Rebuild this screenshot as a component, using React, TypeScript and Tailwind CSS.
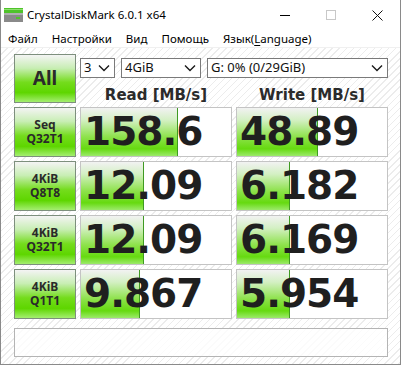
import React from "react"

const rows = [
    { top: "Seq", bottom: "Q32T1", read: "158.6", readBar: 97, write: "48.89", writeBar: 81 },
    { top: "4KiB", bottom: "Q8T8", read: "12.09", readBar: 63, write: "6.182", writeBar: 53 },
    { top: "4KiB", bottom: "Q32T1", read: "12.09", readBar: 63, write: "6.169", writeBar: 53 },
    { top: "4KiB", bottom: "Q1T1", read: "9.867", readBar: 59, write: "5.954", writeBar: 53 },
]

const ui = "font-['Noto_Sans','Open_Sans',sans-serif]"

function Chevron() {
    return (
        <svg width="12" height="8" viewBox="0 0 12 8" className="shrink-0">
            <path d="M1 1.5 L6 6.5 L11 1.5" fill="none" stroke="#1a1a1a" strokeWidth="1.4" />
        </svg>
    )
}

function Select({ label, w }: { label: string; w: string }) {
    return (
        <div className={`${w} h-[20px] border border-[#7a7a7a] bg-white flex items-center justify-between pl-[3px] pr-[4px] text-[13px] text-[#111] ${ui}`}>
            <span>{label}</span>
            <Chevron />
        </div>
    )
}

function GreenButton({ children, big }: { children: React.ReactNode; big?: boolean }) {
    return (
        <div
            className={`h-full border border-[#7d8f7d] bg-[linear-gradient(to_bottom,#f4f4f4_0%,#c8eeb4_28%,#74dc1c_58%,#5ed600_80%,#a4ee70_100%)] flex items-center justify-center text-center font-bold text-[#2a2a2a] ${ui} ${big ? "text-[19px]" : "text-[12px] leading-[14px]"}`}
        >
            {children}
        </div>
    )
}

function Value({ value, bar }: { value: string; bar: number }) {
    return (
        <div className="relative h-full border border-[#c4c4c4] bg-white overflow-hidden">
            <div
                className="absolute left-0 top-0 bottom-0 border-r border-[#3f9a22] bg-[linear-gradient(to_bottom,#f2f2f2_0%,#d4f0c4_25%,#8ee24c_60%,#66da10_85%,#9cea6a_100%)]"
                style={{ width: bar }}
            />
            <div className="relative h-full flex items-center pl-[3px] font-['DejaVu_Sans',sans-serif] font-bold text-[39px] tracking-[-1px] text-[#1f1f1f]">
                {value}
            </div>
        </div>
    )
}

export default function App() {
    return (
        <div className="w-[402px] h-[367px] bg-white">
            <div className="w-[401px] h-[365px] border-x border-b border-[#8a8a8a] flex flex-col bg-white">
                {/* title bar */}
                <div className={`h-[30px] flex items-center ${ui}`}>
                    <svg width="19" height="14" viewBox="0 0 19 14" className="ml-[3px] mr-[4px]">
                        <rect x="0" y="0" width="19" height="5" fill="#4fc32a" />
                        <rect x="0" y="1" width="19" height="1" fill="#8fe070" />
                        <rect x="0" y="5" width="19" height="9" fill="#8a8a8a" />
                        <rect x="0" y="5" width="19" height="2" fill="#b0b0b0" />
                        <rect x="12" y="9" width="4" height="2" fill="#4fc32a" />
                    </svg>
                    <span className="text-[11.5px] text-black">CrystalDiskMark 6.0.1 x64</span>
                    <div className="ml-auto flex items-center h-full">
                        <div className="w-[46px] h-full flex items-center justify-center">
                            <div className="w-[10px] h-px bg-black" />
                        </div>
                        <div className="w-[46px] h-full flex items-center justify-center">
                            <div className="w-[10px] h-[10px] border border-[#c8c8c8]" />
                        </div>
                        <div className="w-[46px] h-full flex items-center justify-center">
                            <svg width="11" height="11" viewBox="0 0 11 11">
                                <path d="M0.5 0.5 L10.5 10.5 M10.5 0.5 L0.5 10.5" stroke="#111" strokeWidth="1" />
                            </svg>
                        </div>
                    </div>
                </div>
                {/* menu */}
                <div className={`h-[17px] flex items-center gap-[14px] pl-[7px] text-[11.5px] text-black ${ui}`}>
                    <span>Файл</span>
                    <span>Настройки</span>
                    <span>Вид</span>
                    <span>Помощь</span>
                    <span>
                        Язык(<span className="underline underline-offset-2">L</span>anguage)
                    </span>
                </div>
                {/* content */}
                <div className="flex-1 border-t border-[#f0f0f0] bg-[repeating-linear-gradient(135deg,#ffffff_0px,#ffffff_4px,#ececec_4px,#ececec_5px)] pl-[13px] pt-[6px]">
                    <div className="grid grid-cols-[62px_152px_152px] gap-x-[4px] gap-y-[4px] grid-rows-[49px_50px_50px_50px_50px]">
                        <GreenButton big>All</GreenButton>
                        <div className="col-span-2 flex flex-col">
                            <div className="flex mt-[4px]">
                                <Select label="3" w="w-[35px]" />
                                <Select label="4GiB" w="w-[80px] ml-[6px]" />
                                <Select label="G: 0% (0/29GiB)" w="w-[181px] ml-[6px]" />
                            </div>
                            <div className="grid grid-cols-2 gap-x-[4px] mt-[6px] font-['DejaVu_Sans',sans-serif] font-bold text-[15px] text-[#2b2b2b]">
                                <div className="text-center">Read [MB/s]</div>
                                <div className="text-center">Write [MB/s]</div>
                            </div>
                        </div>
                        {rows.map((r, i) => (
                            <React.Fragment key={i}>
                                <GreenButton>
                                    <p>
                                        {r.top}
                                        <br />
                                        {r.bottom}
                                    </p>
                                </GreenButton>
                                <Value value={r.read} bar={r.readBar} />
                                <Value value={r.write} bar={r.writeBar} />
                            </React.Fragment>
                        ))}
                    </div>
                    <div className="mt-[9px] w-[374px] h-[29px] border border-[#b4b4b4] bg-white/80" />
                </div>
            </div>
        </div>
    )
}
